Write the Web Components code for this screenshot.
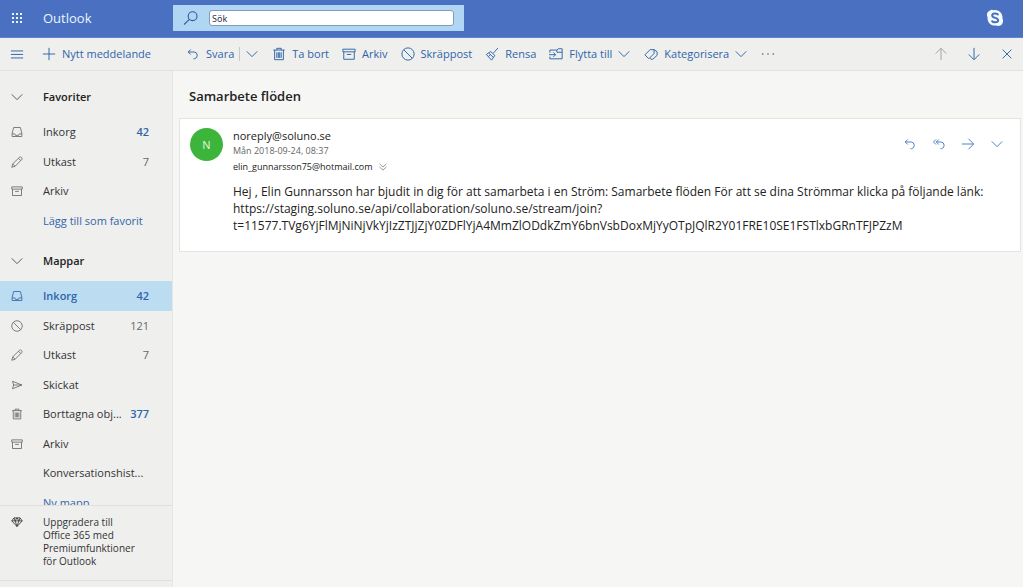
<!DOCTYPE html>
<html lang="sv">
<head>
<meta charset="utf-8">
<title>Outlook</title>
<style>
body { margin: 0; font-family: "Open Sans", "Noto Sans", sans-serif; font-size: 11px; color: #333; }
</style>
</head>
<body>
<mail-app></mail-app>
<script>
const define = (name, html) => customElements.define(name, class extends HTMLElement {
  connectedCallback() {
    if (this.shadowRoot) return;
    const root = this.attachShadow({ mode: 'open' });
    const t = document.createElement('template');
    t.innerHTML = typeof html === 'function' ? html(this) : html;
    root.append(t.content.cloneNode(true));
  }
});

const ICONS = {
  waffle: '<g fill="currentColor" stroke="none"><path d="M3 3h2v2H3zM7 3h2v2H7zM11 3h2v2h-2zM3 7h2v2H3zM7 7h2v2H7zM11 7h2v2h-2zM3 11h2v2H3zM7 11h2v2H7zM11 11h2v2h-2z"/></g>',
  search: '<circle cx="9.6" cy="6.2" r="4.4"/><path d="M6.400 9.400 1 14.500"/>',
  menu: '<path d="M1 4.5h14M1 8.5h14M1 12.5h14"/>',
  plus: '<path d="M8 1v14M1 8h14"/>',
  reply: '<path d="M5.400 2.800 2.500 5.700l2.900 2.900M2.500 5.700h6.800a3.900 3.900 0 0 1 .5 7.700H8.500"/>',
  replyall: '<path d="M4.600 2.800 1.700 5.700l2.900 2.900M7.800 2.800 4.900 5.700l2.900 2.900M4.900 5.700h5.400a3.900 3.900 0 0 1 .5 7.700h-1"/>',
  forward: '<path d="M1 8h13.5M8.5 2l6 6-6 6"/>',
  chevron: '<path d="M2 5l6 6 6-6"/>',
  double: '<path d="M2.5 3 8 8l5.500-5M2.500 8 8 13l5.500-5"/>',
  trash: '<path d="M1.500 3.500h13M5.500 3.500v-2h5v2M3 3.500v11h10v-11M5.500 6v6.500M7.200 6v6.500M8.800 6v6.500M10.500 6v6.500"/>',
  archive: '<path d="M1 2.500h14v3H1zM2 5.500v8.500h12V5.500M5.500 8.500h5"/>',
  block: '<circle cx="8" cy="8" r="7"/><path d="M3.100 3.100l9.800 9.800"/>',
  sweep: '<path d="M14.800 1.200 9.500 7M6.500 5.200l4.800 4.400M6.500 5.200 1.500 8.500l6 6.500 3.800-5.400M4.500 7l5.200 5M4 10.800l2-1.800"/>',
  move: '<path d="M1 6.500V3.500h8l1.500-1.500H15v11.500H1v-2.500M9 3.500V6h6M0 8.800h7.500M5 6.300l2.500 2.500L5 11.300"/>',
  tag: '<path d="M5 13 1 9l6-6h4.500v4.500L6 13zM11.500 3l3.500 2.500v4L10 14H8l-1.500-1.500"/>',
  more: '<g fill="currentColor" stroke="none"><circle cx="1" cy="8" r="1.100"/><circle cx="8" cy="8" r="1.100"/><circle cx="15" cy="8" r="1.100"/></g>',
  up: '<path d="M8 15V1.500M2 7.500l6-6 6 6"/>',
  down: '<path d="M8 1v13.500M2 8.500l6 6 6-6"/>',
  close: '<path d="M3 3l10 10M13 3 3 13"/>',
  inbox: '<path d="M3.500 2h9L14.500 10v4h-13v-4zM1.500 10.500H5l1 2h4l1-2h3.500"/>',
  pencil: '<path d="M1 15l1.300-4.500L11.500 1.500c1.500-1.200 4.200 1.400 3 3L5.500 13.700zM10 3l3 3M2.300 10.500l3.200 3.200"/>',
  send: '<path d="M2 3l12.500 5L2 13l1.500-5zM3.500 8h11"/>',
  diamond: '<path d="M4 2.500h8L15 6.500 8 14 1 6.500zM1 6.500h14M4 2.500l1.500 4L8 14l2.500-7.500 1.500-4M5.500 6.500 8 2.500l2.500 4"/>'
};

define('ui-icon', el => `<style>
  :host { display: inline-flex; flex: none; width: 14px; height: 14px; }
  :host([size="small"]) { width: 10px; height: 10px; }
  :host([size="medium"]) { width: 12px; height: 12px; }
  :host([size="large"]) { width: 16px; height: 16px; }
  svg { width: 100%; height: 100%; fill: none; stroke: currentColor; stroke-width: 1.1; overflow: visible; }
</style><svg viewBox="0 0 16 16" aria-hidden="true">${ICONS[el.getAttribute('name')]}</svg>`);

define('icon-button', el => `<style>
  :host { display: inline-flex; color: #2f65a8; }
  button { display: flex; align-items: center; gap: 6px; padding: 0; border: 0; background: none; color: inherit; font: inherit; line-height: 20px; white-space: nowrap; cursor: pointer; }
</style><button aria-label="${el.getAttribute('label') || el.textContent}"><ui-icon name="${el.getAttribute('icon')}" size="${el.getAttribute('size') || ''}"></ui-icon><slot></slot></button>`);

define('top-bar', `<style>
  :host { display: grid; grid-template-columns: 173px 1fr; align-items: center; height: 38px; padding-bottom: 1px; background: #4a71c1; border-bottom: 1px solid #6284cc; color: #e9f5ff; box-sizing: border-box; }
  .brand { display: flex; align-items: center; gap: 18px; padding-left: 9px; }
  .brand icon-button { color: inherit; }
  .brand a { color: inherit; text-decoration: none; font-size: 13px; line-height: 20px; font-weight: 500; }
  .right { display: flex; align-items: center; justify-content: space-between; padding-right: 19px; }
  label { display: flex; align-items: center; gap: 10px; width: 291px; height: 26px; padding: 0 10px; background: #b1d6f3; color: #2f5c9c; box-sizing: border-box; }
  input { flex: 1; min-width: 0; height: 16px; padding: 0 2px; border: 1px solid #7f9db9; border-radius: 3px; background: #fff; color: #2b3350; font: 9px "Noto Sans", sans-serif; box-sizing: border-box; }
  .skype { display: block; padding: 0; border: 0; background: none; width: 18px; height: 18px; color: #fff; }
  svg { display: block; width: 18px; height: 18px; }
</style>
<div class="brand"><icon-button icon="waffle" size="large" label="Appstartare"></icon-button><a href="#">Outlook</a></div>
<div class="right">
  <label><ui-icon name="search" size="large"></ui-icon><input type="text" value="Sök" aria-label="Sök"></label>
  <button class="skype" aria-label="Skype"><svg viewBox="0 0 18 18"><path fill="#f2fbff" d="M5 1c1-.5 2-.2 3 .2 5-.7 9 3.300 8.500 8.300.8 1.500.8 4-.5 5.800-1.700 1.800-4 2-6 1.200-5 .7-9-3.300-8.400-8.300C.3 6 .8 2.500 5 1z"/><path fill="none" stroke="#4a71c1" stroke-width="2" d="M12.200 6.200C11.500 4 6.200 4 6.200 6.600c0 2.900 6 1.700 6 4.700 0 2.600-5.700 2.700-6.400.2"/></svg></button>
</div>`);

define('command-bar', `<style>
  :host { display: grid; grid-template-columns: 186px 1fr auto; align-items: center; height: 33px; background: #efefee; border-bottom: 1px solid #e2e2e1; box-sizing: border-box; }
  .start, .commands, .pager { display: flex; align-items: center; }
  .start { padding-left: 10px; gap: 18px; }
  .commands { gap: 13px; }
  .split { display: flex; align-items: center; gap: 5px; }
  .split i { width: 1px; height: 14px; background: #c8c8c8; }
  .pager { gap: 19px; padding-right: 9px; }
  .off { color: #a0a0a0; }
  .more { color: #555; padding-left: 1px; }
</style>
<div class="start"><icon-button icon="menu" label="Meny"></icon-button><icon-button icon="plus">Nytt meddelande</icon-button></div>
<div class="commands">
  <div class="split"><icon-button icon="reply">Svara</icon-button><i></i><icon-button icon="chevron" label="Fler svarsalternativ"></icon-button></div>
  <icon-button icon="trash">Ta bort</icon-button>
  <icon-button icon="archive">Arkiv</icon-button>
  <icon-button icon="block">Skräppost</icon-button>
  <icon-button icon="sweep">Rensa</icon-button>
  <div class="split"><icon-button icon="move">Flytta till</icon-button><icon-button icon="chevron" label="Välj mapp"></icon-button></div>
  <div class="split"><icon-button icon="tag">Kategorisera</icon-button><icon-button icon="chevron" label="Välj kategori"></icon-button></div>
  <icon-button class="more" icon="more" size="medium" label="Mer"></icon-button>
</div>
<div class="pager"><icon-button class="off" icon="up" label="Föregående"></icon-button><icon-button icon="down" label="Nästa"></icon-button><icon-button icon="close" label="Stäng"></icon-button></div>`);

define('folder-group', el => `<style>
  :host { display: block; }
  h2 { margin: 0; font-size: 11px; font-weight: 600; line-height: 20px; color: #222; }
  button { display: grid; grid-template-columns: 14px 1fr; gap: 19px; align-items: center; width: 100%; height: 46px; padding: 5px 0 0 10px; border: 0; background: none; color: inherit; font: inherit; text-align: left; box-sizing: border-box; }
  ui-icon { color: #555; }
  .rows { display: grid; grid-auto-rows: 1fr; height: ${el.getAttribute('height')}px; }
</style><h2><button aria-expanded="true"><ui-icon name="chevron"></ui-icon>${el.getAttribute('heading')}</button></h2><div class="rows"><slot></slot></div>`);

define('folder-row', el => {
  const icon = el.getAttribute('icon'), count = el.getAttribute('count');
  return `<style>
  :host { display: block; min-width: 0; }
  a { display: grid; grid-template-columns: 12px 1fr auto; align-items: center; column-gap: 8px; height: 100%; padding: 1px 23px 0 11px; color: inherit; text-decoration: none; line-height: 20px; box-sizing: border-box; }
  .name { padding-left: 12px; overflow: hidden; text-overflow: ellipsis; white-space: nowrap; min-width: 0; }
  .name:last-child { grid-column: 2 / -1; }
  ui-icon { color: #666; }
  .count { color: #666; }
  :host([unread]) .count { color: #2f65a8; font-weight: 600; }
  :host([selected]) a { background: #bcdcf1; color: #2f65a8; font-weight: 600; }
  :host([selected]) ui-icon { color: #2f65a8; }
  :host([action]) a { color: #2f65a8; }
</style><a href="#">${icon ? `<ui-icon name="${icon}" size="medium"></ui-icon>` : '<span></span>'}<span class="name"><slot></slot></span>${count ? `<span class="count">${count}</span>` : ''}</a>`;
});

define('side-bar', `<style>
  :host { display: flex; flex-direction: column; min-height: 0; background: #efefee; border-right: 1px solid #e6e6e5; }
  nav { flex: 1; min-height: 0; overflow: hidden; }
  .upgrade { display: grid; grid-template-columns: 12px 1fr; gap: 20px; padding: 10px 24px 12px 11px; border-top: 1px solid #dfdfde; color: #333; text-decoration: none; font-size: 10px; line-height: 13px; }
  footer { height: 6px; border-top: 1px solid #dfdfde; }
</style>
<nav>
  <folder-group heading="Favoriter" height="118">
    <folder-row icon="inbox" count="42" unread>Inkorg</folder-row>
    <folder-row icon="pencil" count="7">Utkast</folder-row>
    <folder-row icon="archive">Arkiv</folder-row>
    <folder-row action>Lägg till som favorit</folder-row>
  </folder-group>
  <folder-group heading="Mappar" height="236">
    <folder-row icon="inbox" count="42" unread selected>Inkorg</folder-row>
    <folder-row icon="block" count="121">Skräppost</folder-row>
    <folder-row icon="pencil" count="7">Utkast</folder-row>
    <folder-row icon="send">Skickat</folder-row>
    <folder-row icon="trash" count="377" unread>Borttagna obj...</folder-row>
    <folder-row icon="archive">Arkiv</folder-row>
    <folder-row>Konversationshist...</folder-row>
    <folder-row action>Ny mapp</folder-row>
  </folder-group>
</nav>
<a class="upgrade" href="#"><ui-icon name="diamond" size="medium"></ui-icon><span>Uppgradera till<br>Office 365 med<br>Premiumfunktioner<br>för Outlook</span></a>
<footer></footer>`);

define('mail-message', `<style>
  :host { display: grid; grid-template-columns: 33px 1fr; column-gap: 10px; padding: 9px 16px 17px 10px; background: #fff; border: 1px solid #e4e4e3; color: #222; }
  .avatar { display: grid; place-items: center; width: 33px; height: 33px; border-radius: 50%; background: #3db53b; color: #e4f8e2; }
  header { display: flex; justify-content: space-between; align-items: flex-start; }
  .from { line-height: 15px; }
  .date { font-size: 9px; line-height: 16px; color: #666; }
  .to { display: flex; align-items: center; gap: 5px; font-size: 9px; line-height: 16px; }
  .to icon-button { height: 16px; align-items: center; color: #666; }
  .actions { display: flex; gap: 15px; padding-top: 6px; }
  .actions icon-button { color: #4a7fc8; height: 20px; align-items: center; }
  p { margin: 8px 0 0; font-size: 12px; line-height: 17px; overflow-wrap: anywhere; }
</style>
<div class="avatar">N</div>
<div>
  <header>
    <div><div class="from">noreply@soluno.se</div><div class="date">Mån 2018-09-24, 08:37</div><div class="to"><span>elin_gunnarsson75@hotmail.com</span><icon-button icon="double" size="small" label="Visa detaljer"></icon-button></div></div>
    <div class="actions"><icon-button icon="reply" label="Svara"></icon-button><icon-button icon="replyall" label="Svara alla"></icon-button><icon-button icon="forward" label="Vidarebefordra"></icon-button><icon-button icon="chevron" label="Fler åtgärder"></icon-button></div>
  </header>
  <p>Hej , Elin Gunnarsson har bjudit in dig för att samarbeta i en Ström: Samarbete flöden För att se dina Strömmar klicka på följande länk:<br>https://staging.soluno.se/api/collaboration/soluno.se/stream/join?<br>t=11577.TVg6YjFlMjNiNjVkYjIzZTJjZjY0ZDFlYjA4MmZlODdkZmY6bnVsbDoxMjYyOTpJQlR2Y01FRE10SE1FSTlxbGRnTFJPZzM</p>
</div>`);

define('reading-pane', `<style>
  :host { display: block; min-width: 0; padding: 0 2px 0 6px; background: #f6f6f5; }
  h1 { margin: 0; padding: 15px 10px 12px; font-size: 13px; line-height: 20px; font-weight: 600; color: #222; }
</style><h1>Samarbete flöden</h1><slot></slot>`);

define('mail-app', `<style>
  :host { display: grid; grid-template: auto auto 1fr / 173px 1fr; height: 100vh; overflow: hidden; }
  top-bar, command-bar { grid-column: 1 / -1; }
</style><top-bar></top-bar><command-bar></command-bar><side-bar></side-bar><reading-pane><mail-message></mail-message></reading-pane>`);
</script>
</body>
</html>
